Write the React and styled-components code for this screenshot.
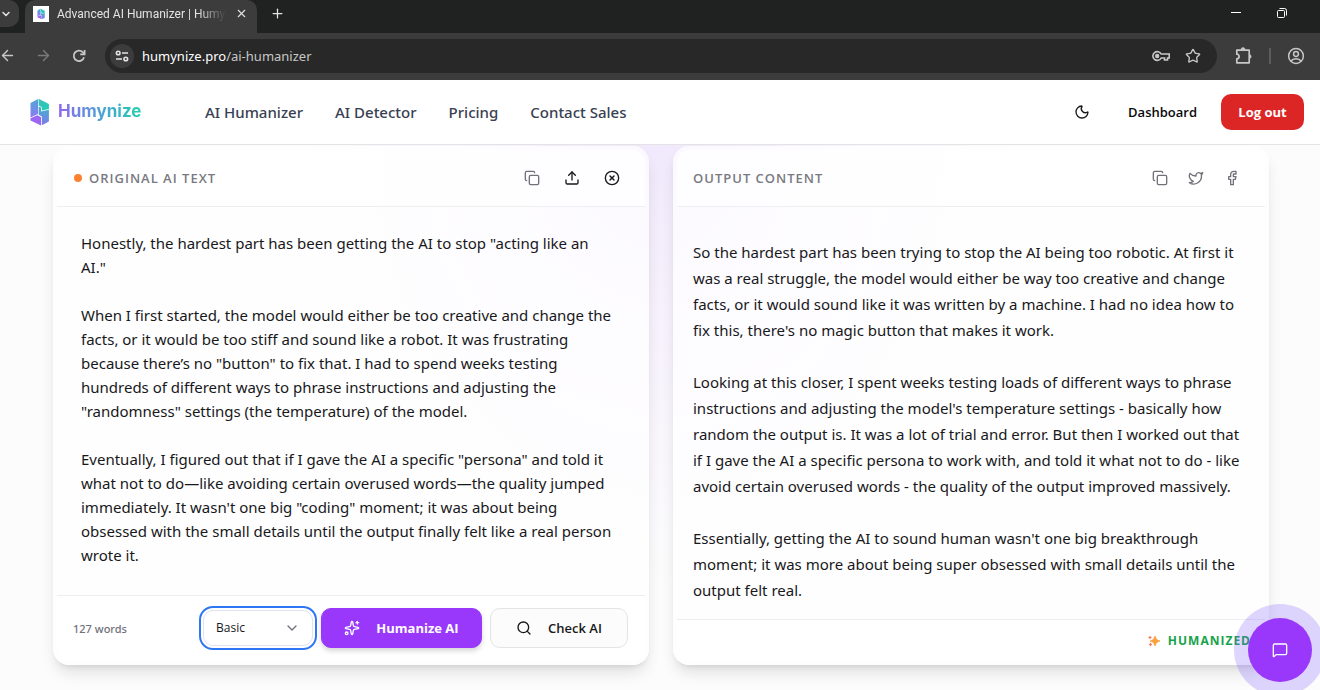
import React, { useState } from 'react'
import styled, { createGlobalStyle, css } from 'styled-components'
import {
    ChevronDown, X, Plus, ArrowLeft, ArrowRight, Star, Moon, Copy,
    Upload, CircleX, Twitter, Facebook, Sparkles, Search, MessageSquare
} from 'lucide-react'

const sans = `'Open Sans', 'Noto Sans', 'Liberation Sans', sans-serif`

const GlobalStyle = createGlobalStyle`
    * {
        box-sizing: border-box;
    }
    body {
        margin: 0;
        font-family: ${sans};
        color: #18181b;
        background: #fcfcfc;
    }
    button, select, textarea, input {
        font-family: inherit;
        color: inherit;
    }
    h2, p {
        margin: 0;
    }
`

const Window = styled.div`
    display: flex;
    flex-direction: column;
    height: 100vh;
    overflow: hidden;
`

const IconButton = styled.button`
    display: flex;
    align-items: center;
    justify-content: center;
    flex: none;
    width: ${({ size }) => size || '32px'};
    height: ${({ size }) => size || '32px'};
    padding: 0;
    border: 0;
    border-radius: 50%;
    background: ${({ background }) => background || 'transparent'};
    color: ${({ color }) => color || 'inherit'};
    cursor: pointer;
`

const TabStrip = styled.div`
    display: flex;
    align-items: flex-start;
    flex: none;
    height: 33px;
    background: #202221;
    color: #e3e3e3;
`

const TabSearch = styled.button`
    display: flex;
    align-items: center;
    width: 19px;
    height: 27px;
    padding: 0;
    border: 0;
    border-radius: 0 10px 10px 0;
    background: #3c3c3c;
    cursor: pointer;
`

const Tab = styled.div`
    display: flex;
    align-items: center;
    width: 232px;
    height: 33px;
    margin-left: 6px;
    margin-right: 7px;
    padding: 0 8px 6px;
    border-radius: 10px 10px 0 0;
    background: #3c3c3c;
`

const Favicon = styled.span`
    display: flex;
    align-items: center;
    justify-content: center;
    width: 16px;
    height: 16px;
    margin-right: 8px;
    background: #fff;
`

const TabTitle = styled.span`
    flex: 1;
    white-space: nowrap;
    font-family: Roboto, ${sans};
    font-size: 12px;
    line-height: 16px;
    mask-image: linear-gradient(to right, #000 80%, transparent 96%);
`

const WindowControls = styled.div`
    display: flex;
    gap: 20px;
    margin-left: auto;
    padding-right: 25px;
`

const Toolbar = styled.div`
    display: flex;
    align-items: center;
    flex: none;
    height: 47px;
    padding: 0 8px 2px 0;
    background: #3c3c3c;
    color: #c7c7c7;
`

const NavButtons = styled.div`
    display: flex;
    gap: 4px;
    margin-left: -9px;
    margin-right: 10px;
`

const AddressBar = styled.div`
    display: flex;
    align-items: center;
    flex: 1;
    height: 34px;
    margin-right: 11px;
    padding: 0 8px 0 5px;
    border-radius: 17px;
    background: #282828;
`

const Url = styled.span`
    flex: 1;
    margin-left: 8px;
    font-family: 'Noto Sans', ${sans};
    font-size: 13px;
    color: #c7c7c7;

    b {
        font-weight: 400;
        color: #fff;
    }
`

const ToolbarRule = styled.span`
    width: 2px;
    height: 16px;
    margin: 0 9px;
    background: #5c5c5c;
`

const SiteHeader = styled.header`
    display: flex;
    align-items: center;
    flex: none;
    height: 65px;
    padding: 0 16px 0 29px;
    border-bottom: 1px solid #e4e4e7;
    background: #fff;
`

const Brand = styled.a`
    display: flex;
    align-items: center;
    gap: 8px;
    width: 115px;
    text-decoration: none;

    svg {
        flex: none;
    }
`

const BrandName = styled.span`
    padding-bottom: 2px;
    font-family: Inter, ${sans};
    font-size: 17px;
    font-weight: 700;
    line-height: 28px;
    color: transparent;
    background: linear-gradient(to right, #9068ee, #4f9fd6 50%, #1fcfb0);
    background-clip: text;
`

const Nav = styled.nav`
    display: flex;
    gap: 32px;
    margin-left: 61px;
`

const NavLink = styled.a`
    font-family: 'Noto Sans', ${sans};
    font-size: 15px;
    font-weight: 500;
    color: #374151;
    text-decoration: none;
`

const Account = styled.div`
    display: flex;
    align-items: center;
    gap: 24px;
    margin-left: auto;
    font-size: 13px;
    font-weight: 600;
`

const DashboardLink = styled.a`
    margin-left: 6px;
    color: #09090b;
    text-decoration: none;
`

const LogOut = styled.button`
    width: 83px;
    height: 36px;
    padding: 0;
    border: 0;
    border-radius: 10px;
    background: #dc2626;
    color: #fff;
    font-size: 13px;
    font-weight: 700;
    cursor: pointer;
`

const Main = styled.main`
    display: grid;
    grid-template-columns: 1fr 1fr;
    gap: 24px;
    flex: 1;
    min-height: 0;
    padding: 1px 51px 25px 53px;
    background: radial-gradient(ellipse 360px 440px at 50% 0, #f1e9fc, #f7f2fd 40%, #fcfcfc 100%);
`

const Card = styled.section`
    display: flex;
    flex-direction: column;
    min-width: 0;
    padding: 4px;
    border-radius: 16px;
    background: rgba(255, 255, 255, 0.72);
    box-shadow: 0 10px 16px -3px rgba(0, 0, 0, 0.12), 0 4px 6px -4px rgba(0, 0, 0, 0.12);
`

const CardHeader = styled.div`
    display: flex;
    align-items: center;
    flex: none;
    height: 57px;
    padding: 0 17px 0 16px;
    border-bottom: 1px solid #eeeef0;
    border-radius: 12px 12px 0 0;
    background: rgba(255, 255, 255, 0.6);
`

const Dot = styled.span`
    width: 8px;
    height: 8px;
    margin-left: 1px;
    margin-right: 7px;
    border-radius: 50%;
    background: #fb8231;
`

const CardTitle = styled.h2`
    font-size: 13px;
    font-weight: 600;
    letter-spacing: 1px;
    text-transform: uppercase;
    color: #797981;
`

const CardActions = styled.div`
    display: flex;
    gap: ${({ gap }) => gap};
    margin-left: auto;
`

const prose = css`
    font-family: 'Noto Sans', ${sans};
    font-size: 15px;
    color: #18181b;
`

const SourceText = styled.textarea`
    ${prose}
    flex: 1;
    padding: 24px 30px 24px 24px;
    border: 0;
    outline: 0;
    resize: none;
    overflow: hidden;
    background: transparent;
    line-height: 24px;
`

const OutputText = styled.div`
    ${prose}
    display: flex;
    flex-direction: column;
    gap: 26px;
    flex: 1;
    padding: 32px 16px 0;
    line-height: 26px;
`

const CardFooter = styled.div`
    display: flex;
    align-items: center;
    flex: none;
    height: ${({ height }) => height};
    padding: 0 17px 0 16px;
    border-top: 1px solid #eeeef0;
    border-radius: 0 0 12px 12px;
    background: rgba(255, 255, 255, 0.6);
`

const WordCount = styled.span`
    font-family: 'Noto Sans', ${sans};
    font-size: 11px;
    font-weight: 500;
    color: #71717a;
`

const Actions = styled.div`
    display: flex;
    gap: 8px;
    margin-left: auto;
    margin-bottom: 2px;
`

const ModeField = styled.label`
    display: grid;
    align-items: center;
    width: 110px;
    height: 36px;
    margin: 2px 0;
    border-radius: 10px;
    outline: 2px solid #2f76f6;
    outline-offset: 2px;

    > * {
        grid-area: 1 / 1;
    }

    svg {
        justify-self: end;
        margin-right: 13px;
        color: #71717a;
        pointer-events: none;
    }
`

const ModeSelect = styled.select`
    appearance: none;
    width: 100%;
    height: 100%;
    padding: 0 12px;
    border: 1px solid #dfe3f0;
    border-radius: 10px;
    outline: 0;
    background: #fff;
    font-size: 12px;
`

const ActionButton = styled.button`
    display: flex;
    align-items: center;
    justify-content: center;
    gap: 16px;
    width: ${({ width }) => width};
    height: 40px;
    padding: 0;
    border: 1px solid ${({ primary }) => (primary ? '#9938fb' : '#e4e4e7')};
    border-radius: 10px;
    background: ${({ primary }) => (primary ? '#9938fb' : '#fcfcfc')};
    box-shadow: ${({ primary }) => (primary ? '0 3px 5px rgba(0, 0, 0, 0.16)' : 'none')};
    color: ${({ primary }) => (primary ? '#fff' : '#18181b')};
    font-size: 13px;
    font-weight: ${({ primary }) => (primary ? 700 : 600)};
    cursor: pointer;
`

const Humanized = styled.span`
    display: flex;
    align-items: center;
    gap: 8px;
    margin-left: auto;
    margin-right: -3px;
    font-size: 12px;
    font-weight: 700;
    letter-spacing: 1px;
    color: #16a34a;
`

const ChatButton = styled.button`
    position: fixed;
    right: 8px;
    bottom: 8px;
    display: flex;
    align-items: center;
    justify-content: center;
    width: 64px;
    height: 64px;
    padding: 0;
    border: 0;
    border-radius: 50%;
    background: #9938fb;
    box-shadow: 0 0 0 14px rgba(124, 92, 255, 0.25);
    color: #fff;
    cursor: pointer;
`

const Logo = ({ width, height }) => (
    <svg width={width} height={height} viewBox='0 0 20 28' aria-hidden='true'>
        <defs>
            <linearGradient id='logoLeft' x1='0' y1='0' x2='0' y2='1'>
                <stop offset='0' stopColor='#4fa6d8' />
                <stop offset='1' stopColor='#8f7af0' />
            </linearGradient>
            <linearGradient id='logoTop' x1='0' y1='0' x2='1' y2='1'>
                <stop offset='0' stopColor='#3cbfc4' />
                <stop offset='1' stopColor='#1fcfae' />
            </linearGradient>
            <linearGradient id='logoRight' x1='0' y1='0' x2='0' y2='1'>
                <stop offset='0' stopColor='#3fb2cc' />
                <stop offset='1' stopColor='#7f7aea' />
            </linearGradient>
        </defs>
        <path d='M1 5 L8.6 1 V16 L1 19.4Z' fill='url(#logoLeft)' />
        <path d='M9.2 .8 L19.4 6 V11 L12.4 12.6 V9.2 L9.2 7.6Z' fill='url(#logoTop)' />
        <path d='M9.2 8.4 L11.6 9.6 V13.4 L19.4 11.8 V23.4 L12.4 27.2 V18.4 L9.2 16.8Z' fill='url(#logoRight)' />
        <path d='M1 20.2 L7.8 17.2 L11.6 19.2 V27.4 L1 22.4Z' fill='#9a66f3' />
    </svg>
)

const SiteInfoIcon = () => (
    <svg width='14' height='12' viewBox='0 0 14 12' fill='none' stroke='currentColor' strokeWidth='1.6'>
        <circle cx='3.2' cy='3' r='1.8' />
        <path d='M7 3h6M1 9h6' />
        <circle cx='10.8' cy='9' r='1.8' />
    </svg>
)

const KeyIcon = () => (
    <svg width='18' height='12' viewBox='0 0 18 12' fill='none' stroke='currentColor' strokeWidth='1.6'>
        <path d='M9.2 4A4.4 4.4 0 1 0 9.2 8H12.5V10H15.5V8H17.2V4Z' />
        <circle cx='5.2' cy='6' r='1.4' fill='currentColor' />
    </svg>
)

const ExtensionIcon = () => (
    <svg width='18' height='18' viewBox='0 0 18 18' fill='none' stroke='currentColor' strokeWidth='1.7' strokeLinejoin='round'>
        <path d='M1.8 3.2H14.2V15.8H1.8V11.8A2.3 2.3 0 0 0 1.8 7.2Z' />
        <path d='M6 2.6A2 2 0 0 1 10 2.6ZM14.8 7.6A2 2 0 0 1 14.8 11.4Z' fill='currentColor' strokeWidth='.6' />
    </svg>
)

const ProfileIcon = () => (
    <svg width='18' height='18' viewBox='0 0 18 18' fill='none' stroke='currentColor' strokeWidth='1.5'>
        <circle cx='9' cy='9' r='7.4' />
        <circle cx='9' cy='7' r='2.4' />
        <path d='M3.8 14.2C6.2 11 11.8 11 14.2 14.2' />
    </svg>
)

const ReloadIcon = () => (
    <svg width='14' height='14' viewBox='0 0 14 14' fill='none' stroke='currentColor' strokeWidth='1.8'>
        <path d='M12 8.2A5.2 5.2 0 1 1 10.9 3.4L12.4 5' />
        <path d='M12.6 1V5.4H8.2' />
    </svg>
)

const RestoreIcon = () => (
    <svg width='10' height='10' viewBox='0 0 10 10' fill='none' stroke='currentColor'>
        <rect x='.5' y='2.5' width='7' height='7' rx='1' />
        <path d='M2.5 .5H7.5A2 2 0 0 1 9.5 2.5V7.5' />
    </svg>
)

const MinimizeIcon = () => (
    <svg width='10' height='10' viewBox='0 0 10 10' stroke='currentColor'>
        <path d='M0 4.5H10' />
    </svg>
)

const SparkleBadge = () => (
    <svg width='12' height='12' viewBox='0 0 24 24' aria-hidden='true'>
        <path d='M14 2 L17 9 L24 12 L17 15 L14 22 L11 15 L4 12 L11 9Z' fill='#f9a03f' stroke='#f9a03f' strokeWidth='1.5' strokeLinejoin='round' />
        <path d='M4 1 L5.4 3.6 L8 5 L5.4 6.4 L4 9 L2.6 6.4 L0 5 L2.6 3.6Z' fill='#f47b5a' />
        <path d='M5 15 L6.4 17.6 L9 19 L6.4 20.4 L5 23 L3.6 20.4 L1 19 L3.6 17.6Z' fill='#f47b5a' />
    </svg>
)

const source = `Honestly, the hardest part has been getting the AI to stop "acting like an AI."

When I first started, the model would either be too creative and change the facts, or it would be too stiff and sound like a robot. It was frustrating because there’s no "button" to fix that. I had to spend weeks testing hundreds of different ways to phrase instructions and adjusting the "randomness" settings (the temperature) of the model.

Eventually, I figured out that if I gave the AI a specific "persona" and told it what not to do—like avoiding certain overused words—the quality jumped immediately. It wasn't one big "coding" moment; it was about being obsessed with the small details until the output finally felt like a real person wrote it.`

const output = [
    `So the hardest part has been trying to stop the AI being too robotic. At first it was a real struggle, the model would either be way too creative and change facts, or it would sound like it was written by a machine. I had no idea how to fix this, there's no magic button that makes it work.`,
    `Looking at this closer, I spent weeks testing loads of different ways to phrase instructions and adjusting the model's temperature settings - basically how random the output is. It was a lot of trial and error. But then I worked out that if I gave the AI a specific persona to work with, and told it what not to do - like avoid certain overused words - the quality of the output improved massively.`,
    `Essentially, getting the AI to sound human wasn't one big breakthrough moment; it was more about being super obsessed with small details until the output felt real.`
]

const links = ['AI Humanizer', 'AI Detector', 'Pricing', 'Contact Sales']

const BrowserBar = () => (
    <>
        <TabStrip>
            <TabSearch aria-label='Search tabs'><ChevronDown size={12} strokeWidth={3} /></TabSearch>
            <Tab>
                <Favicon><Logo width={8} height={12} /></Favicon>
                <TabTitle>Advanced AI Humanizer | Humy</TabTitle>
                <IconButton size='16px' aria-label='Close tab'><X size={13} /></IconButton>
            </Tab>
            <IconButton size='26px' aria-label='New tab'><Plus size={15} /></IconButton>
            <WindowControls>
                <IconButton size='26px' color='#fff' aria-label='Minimize'><MinimizeIcon /></IconButton>
                <IconButton size='26px' color='#fff' aria-label='Restore'><RestoreIcon /></IconButton>
            </WindowControls>
        </TabStrip>
        <Toolbar>
            <NavButtons>
                <IconButton aria-label='Back'><ArrowLeft size={17} /></IconButton>
                <IconButton color='#7a7a7a' aria-label='Forward'><ArrowRight size={17} /></IconButton>
                <IconButton aria-label='Reload'><ReloadIcon /></IconButton>
            </NavButtons>
            <AddressBar>
                <IconButton size='24px' background='#3c3c3c' color='#e3e3e3' aria-label='Site information'><SiteInfoIcon /></IconButton>
                <Url><b>humynize.pro</b>/ai-humanizer</Url>
                <IconButton aria-label='Passwords'><KeyIcon /></IconButton>
                <IconButton aria-label='Bookmark this tab'><Star size={16} /></IconButton>
            </AddressBar>
            <IconButton aria-label='Extensions'><ExtensionIcon /></IconButton>
            <ToolbarRule />
            <IconButton aria-label='Profile'><ProfileIcon /></IconButton>
        </Toolbar>
    </>
)

const Header = () => (
    <SiteHeader>
        <Brand href='#'>
            <Logo width={21} height={28} />
            <BrandName>Humynize</BrandName>
        </Brand>
        <Nav>
            {links.map(link => <NavLink key={link} href='#'>{link}</NavLink>)}
        </Nav>
        <Account>
            <IconButton aria-label='Dark mode'><Moon size={16} /></IconButton>
            <DashboardLink href='#'>Dashboard</DashboardLink>
            <LogOut>Log out</LogOut>
        </Account>
    </SiteHeader>
)

const App = () => {
    const [text, setText] = useState(source)
    const words = 127

    return (
        <Window>
            <GlobalStyle />
            <BrowserBar />
            <Header />
            <Main>
                <Card>
                    <CardHeader>
                        <Dot />
                        <CardTitle>Original AI text</CardTitle>
                        <CardActions gap='8px'>
                            <IconButton color='#71717a' aria-label='Copy text'><Copy size={16} /></IconButton>
                            <IconButton aria-label='Upload file'><Upload size={16} /></IconButton>
                            <IconButton aria-label='Clear text'><CircleX size={16} /></IconButton>
                        </CardActions>
                    </CardHeader>
                    <SourceText
                        aria-label='Original AI text'
                        spellCheck={false}
                        value={text}
                        onChange={e => setText(e.target.value)}
                    />
                    <CardFooter height='66px'>
                        <WordCount>{words} words</WordCount>
                        <Actions>
                            <ModeField>
                                <ModeSelect aria-label='Mode'>
                                    <option>Basic</option>
                                </ModeSelect>
                                <ChevronDown size={16} />
                            </ModeField>
                            <ActionButton primary='true' width='161px'><Sparkles size={16} />Humanize AI</ActionButton>
                            <ActionButton width='138px'><Search size={16} />Check AI</ActionButton>
                        </Actions>
                    </CardFooter>
                </Card>
                <Card>
                    <CardHeader>
                        <CardTitle>Output content</CardTitle>
                        <CardActions gap='4px'>
                            <IconButton color='#71717a' aria-label='Copy output'><Copy size={16} /></IconButton>
                            <IconButton color='#71717a' aria-label='Share on Twitter'><Twitter size={16} /></IconButton>
                            <IconButton color='#71717a' aria-label='Share on Facebook'><Facebook size={16} /></IconButton>
                        </CardActions>
                    </CardHeader>
                    <OutputText>
                        {output.map(paragraph => <p key={paragraph}>{paragraph}</p>)}
                    </OutputText>
                    <CardFooter height='42px'>
                        <Humanized><SparkleBadge />HUMANIZED</Humanized>
                    </CardFooter>
                </Card>
            </Main>
            <ChatButton aria-label='Open chat'><MessageSquare size={16} /></ChatButton>
        </Window>
    )
}

export default App
